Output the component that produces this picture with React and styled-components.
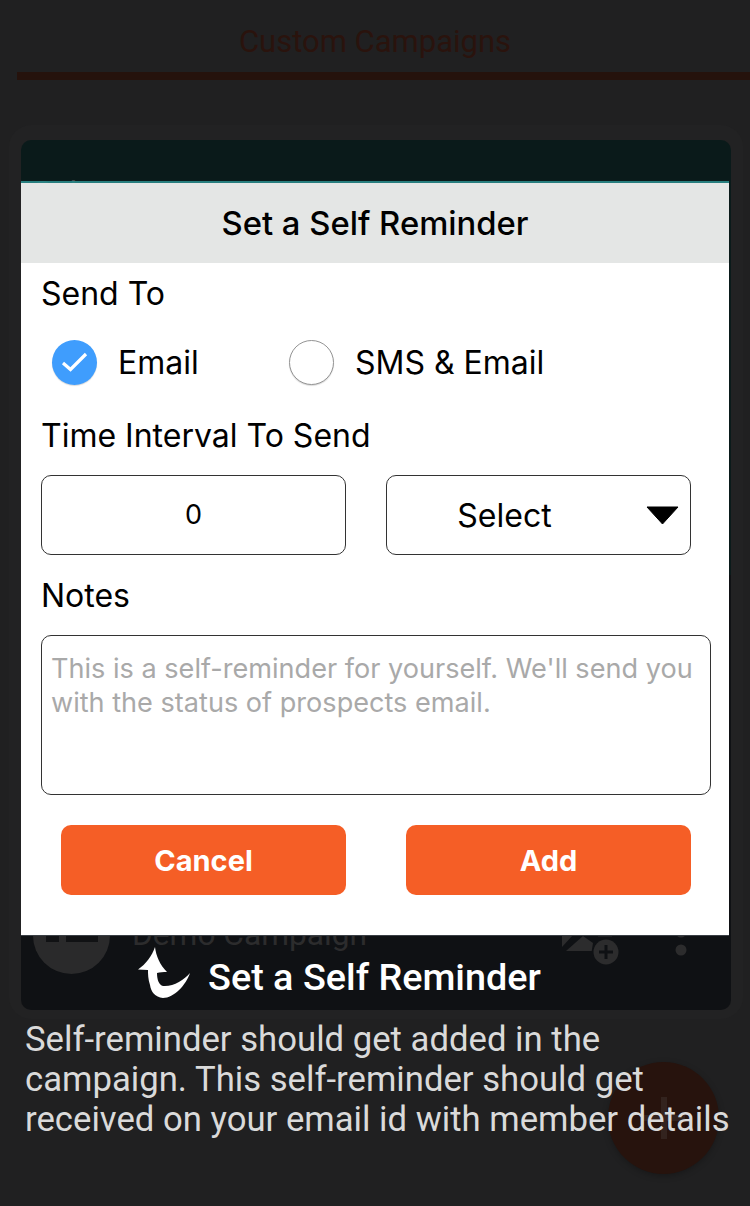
import React from "react";
import styled, { createGlobalStyle } from "styled-components";

const GlobalStyle = createGlobalStyle`
  html, body {
    margin: 0;
    padding: 0;
    background: #202021;
  }
`;

const Page = styled.div`
  position: relative;
  width: 750px;
  height: 1206px;
  overflow: hidden;
  background: #202021;
  font-family: Inter, "Liberation Sans", sans-serif;
`;

const Header = styled.div`
  height: 72px;
  display: flex;
  align-items: center;
  justify-content: center;
  padding-top: 10px;
  box-sizing: border-box;
  color: #2a130d;
  font-family: Roboto, sans-serif;
  font-size: 31px;
`;

const Rule = styled.div`
  height: 8px;
  margin-left: 17px;
  background: #25120c;
`;

const Card = styled.div`
  height: 870px;
  margin: 60px 19px 0 21px;
  border-radius: 10px;
  display: flex;
  flex-direction: column;
  justify-content: space-between;
  overflow: hidden;
  background: linear-gradient(#0a1a1a 0 50%, #0f1114 50%);
  box-shadow: 0 -3px 0 12px #222223;
`;

const CardTop = styled.div`
  padding: 33px 12px 0;
  color: #44484a;
  font-family: Roboto, sans-serif;
  font-size: 32px;
`;

const CampaignRow = styled.div`
  display: flex;
  align-items: center;
  height: 70px;
  margin-bottom: 40px;
  padding: 0 44px 0 12px;
  color: #2c2c2d;
  font-family: Roboto, sans-serif;
  font-size: 31.7px;
`;

const Avatar = styled.div`
  width: 77px;
  height: 77px;
  border-radius: 50%;
  background: #2a2a2b;
  margin-right: 22px;
  display: flex;
  align-items: center;
  justify-content: center;
`;

const CampaignName = styled.span`
  flex: 1;
  margin-top: -1px;
`;

const RowIcon = styled.svg`
  width: 58px;
  height: 66px;
  margin-right: 55px;
`;

const Kebab = styled.svg`
  width: 12px;
  height: 52px;
  margin-bottom: 10px;
`;

const Modal = styled.div`
  position: absolute;
  top: 181px;
  left: 21px;
  width: 708px;
  height: 754px;
  background: #fff;
  background-clip: padding-box;
  border-top: 2px solid rgba(42, 138, 138, 0.9);
  box-shadow: 0 1px 0 #3a3f45;
  box-sizing: border-box;
  color: #000;
`;

const ModalTitle = styled.div`
  height: 80px;
  display: flex;
  align-items: center;
  justify-content: center;
  background: #e4e6e5;
  font-size: 32.8px;
  font-weight: 500;
`;

const ModalBody = styled.div`
  padding: 13px 18px 0 20px;
  display: flex;
  flex-direction: column;
`;

const Label = styled.div`
  font-size: 32px;
  line-height: 36px;
`;

const RadioRow = styled.div`
  display: flex;
  align-items: center;
  height: 46px;
  margin: 27px 0 33px 11px;
`;

const RadioOption = styled.div`
  display: flex;
  align-items: center;
  width: 237px;
  gap: 21px;
  font-size: 32px;
  white-space: nowrap;
`;

const RadioDot = styled.div`
  width: 45px;
  height: 45px;
  border-radius: 50%;
  box-sizing: border-box;
  flex-shrink: 0;
  display: flex;
  align-items: center;
  justify-content: center;
  background: ${(p) => (p.$on ? "#3f9dfd" : "#fff")};
  border: ${(p) => (p.$on ? "none" : "1px solid #949494")};
  box-shadow: 0 1px 1px rgba(0, 0, 0, 0.15);
`;

const FieldRow = styled.div`
  display: flex;
  gap: 40px;
  margin: 21px 0 23px;
`;

const Field = styled.div`
  position: relative;
  width: 305px;
  height: 80px;
  box-sizing: border-box;
  border: 1px solid #333;
  border-radius: 10px;
  display: flex;
  align-items: center;
  justify-content: center;
  font-size: ${(p) => p.$size}px;
`;

const NumberValue = styled.span`
  margin-top: -2px;
`;

const SelectValue = styled.span`
  margin-right: 68px;
`;

const Caret = styled.svg`
  position: absolute;
  right: 11px;
  top: 30px;
  width: 33px;
  height: 19px;
`;

const NotesBox = styled.div`
  height: 160px;
  margin-top: 21px;
  box-sizing: border-box;
  border: 1px solid #333;
  border-radius: 10px;
  padding: 16px 9px;
  color: #a9a9a9;
  font-size: 27.1px;
  line-height: 34px;
`;

const Buttons = styled.div`
  display: flex;
  justify-content: space-between;
  margin: 30px 20px 0 20px;
`;

const Button = styled.div`
  width: 285px;
  height: 70px;
  border-radius: 10px;
  background: #f55e26;
  color: #fff;
  font-size: 29px;
  font-weight: 700;
  display: flex;
  align-items: center;
  justify-content: center;
`;

const Tip = styled.div`
  position: absolute;
  top: 946px;
  left: 138px;
  display: flex;
  align-items: center;
  gap: 18px;
  color: #fff;
  font-family: Roboto, sans-serif;
  font-size: 37.8px;
  font-weight: 500;
`;

const TipLabel = styled.span`
  padding-top: 9px;
`;

const TipArrow = styled.svg`
  width: 52px;
  height: 51px;
`;

const Caption = styled.p`
  position: relative;
  z-index: 1;
  margin: 9px 0 0 25px;
  color: #dadada;
  font-family: Roboto, sans-serif;
  font-size: 34.7px;
  line-height: 40px;
  white-space: nowrap;
`;

const Fab = styled.div`
  position: absolute;
  left: 608px;
  top: 1062px;
  width: 111px;
  height: 112px;
  border-radius: 50%;
  background: #27130d;
  box-shadow: 0 2px 6px rgba(0, 0, 0, 0.25);
  display: flex;
  align-items: center;
  justify-content: center;
`;

export default function App() {
  return (
    <Page>
      <GlobalStyle />
      <Header>Custom Campaigns</Header>
      <Rule />
      <Card>
        <CardTop>Sales</CardTop>
        <CampaignRow>
          <Avatar>
            <svg width="52" height="20" viewBox="0 0 52 20">
              <rect x="0" y="10" width="13" height="7" fill="#111214" />
              <rect x="20" y="2" width="32" height="15" fill="#111214" />
            </svg>
          </Avatar>
          <CampaignName>Demo Campaign</CampaignName>
          <RowIcon viewBox="0 0 58 66">
            <path d="M0 33 H11 L0 45Z" fill="#2c2c2d" />
            <path d="M4 49 L21 34 L31 41 L29.7 49Z" fill="#2c2c2d" />
            <path d="M36 33h14v1.5h-14z" fill="#2c2c2d" />
            <circle cx="44" cy="50" r="12.5" fill="#2c2c2d" />
            <path d="M44 43v14M37 50h14" stroke="#0f1114" strokeWidth="3" />
          </RowIcon>
          <Kebab viewBox="0 0 12 52">
            <circle cx="6" cy="10" r="5.5" fill="#2c2c2d" />
            <circle cx="6" cy="28" r="5.5" fill="#2c2c2d" />
            <circle cx="6" cy="46" r="5.5" fill="#2c2c2d" />
          </Kebab>
        </CampaignRow>
      </Card>
      <Modal>
        <ModalTitle>Set a Self Reminder</ModalTitle>
        <ModalBody>
          <Label>Send To</Label>
          <RadioRow>
            <RadioOption>
              <RadioDot $on>
                <svg width="27" height="20" viewBox="0 0 27 20">
                  <path d="M2 11 L9.5 17.5 L25 2" fill="none" stroke="#fff" strokeWidth="3.2" />
                </svg>
              </RadioDot>
              Email
            </RadioOption>
            <RadioOption>
              <RadioDot />
              SMS &amp; Email
            </RadioOption>
          </RadioRow>
          <Label>Time Interval To Send</Label>
          <FieldRow>
            <Field $size={27}>
              <NumberValue>0</NumberValue>
            </Field>
            <Field $size={32}>
              <SelectValue>Select</SelectValue>
              <Caret viewBox="0 0 33 19">
                <path d="M1 1 H32 L16.5 18Z" fill="#000" stroke="#000" strokeLinejoin="round" />
              </Caret>
            </Field>
          </FieldRow>
          <Label>Notes</Label>
          <NotesBox>
            This is a self-reminder for yourself. We'll send you
            <br />
            with the status of prospects email.
          </NotesBox>
          <Buttons>
            <Button>Cancel</Button>
            <Button>Add</Button>
          </Buttons>
        </ModalBody>
      </Modal>
      <Tip>
        <TipArrow viewBox="0 0 52 51">
          <path d="M17 0 C18 9 22 18 29 25 C25 25 22 25 19 26 C19 33 21 38 25 39 C35 40 46 33 52 26 C48 38 36 51 25 51 C17 50 13 45 12 38 C10 32 10 27 10 23 L0 22.5 C8 17 14 9 17 0Z" fill="#fff" />
        </TipArrow>
        <TipLabel>Set a Self Reminder</TipLabel>
      </Tip>
      <Fab>
        <svg width="42" height="42" viewBox="0 0 42 42">
          <path d="M21 0v42M0 21h42" stroke="#33231e" strokeWidth="6" />
        </svg>
      </Fab>
      <Caption>
        Self-reminder should get added in the
        <br />
        campaign. This self-reminder should get
        <br />
        received on your email id with member details
      </Caption>
    </Page>
  );
}
